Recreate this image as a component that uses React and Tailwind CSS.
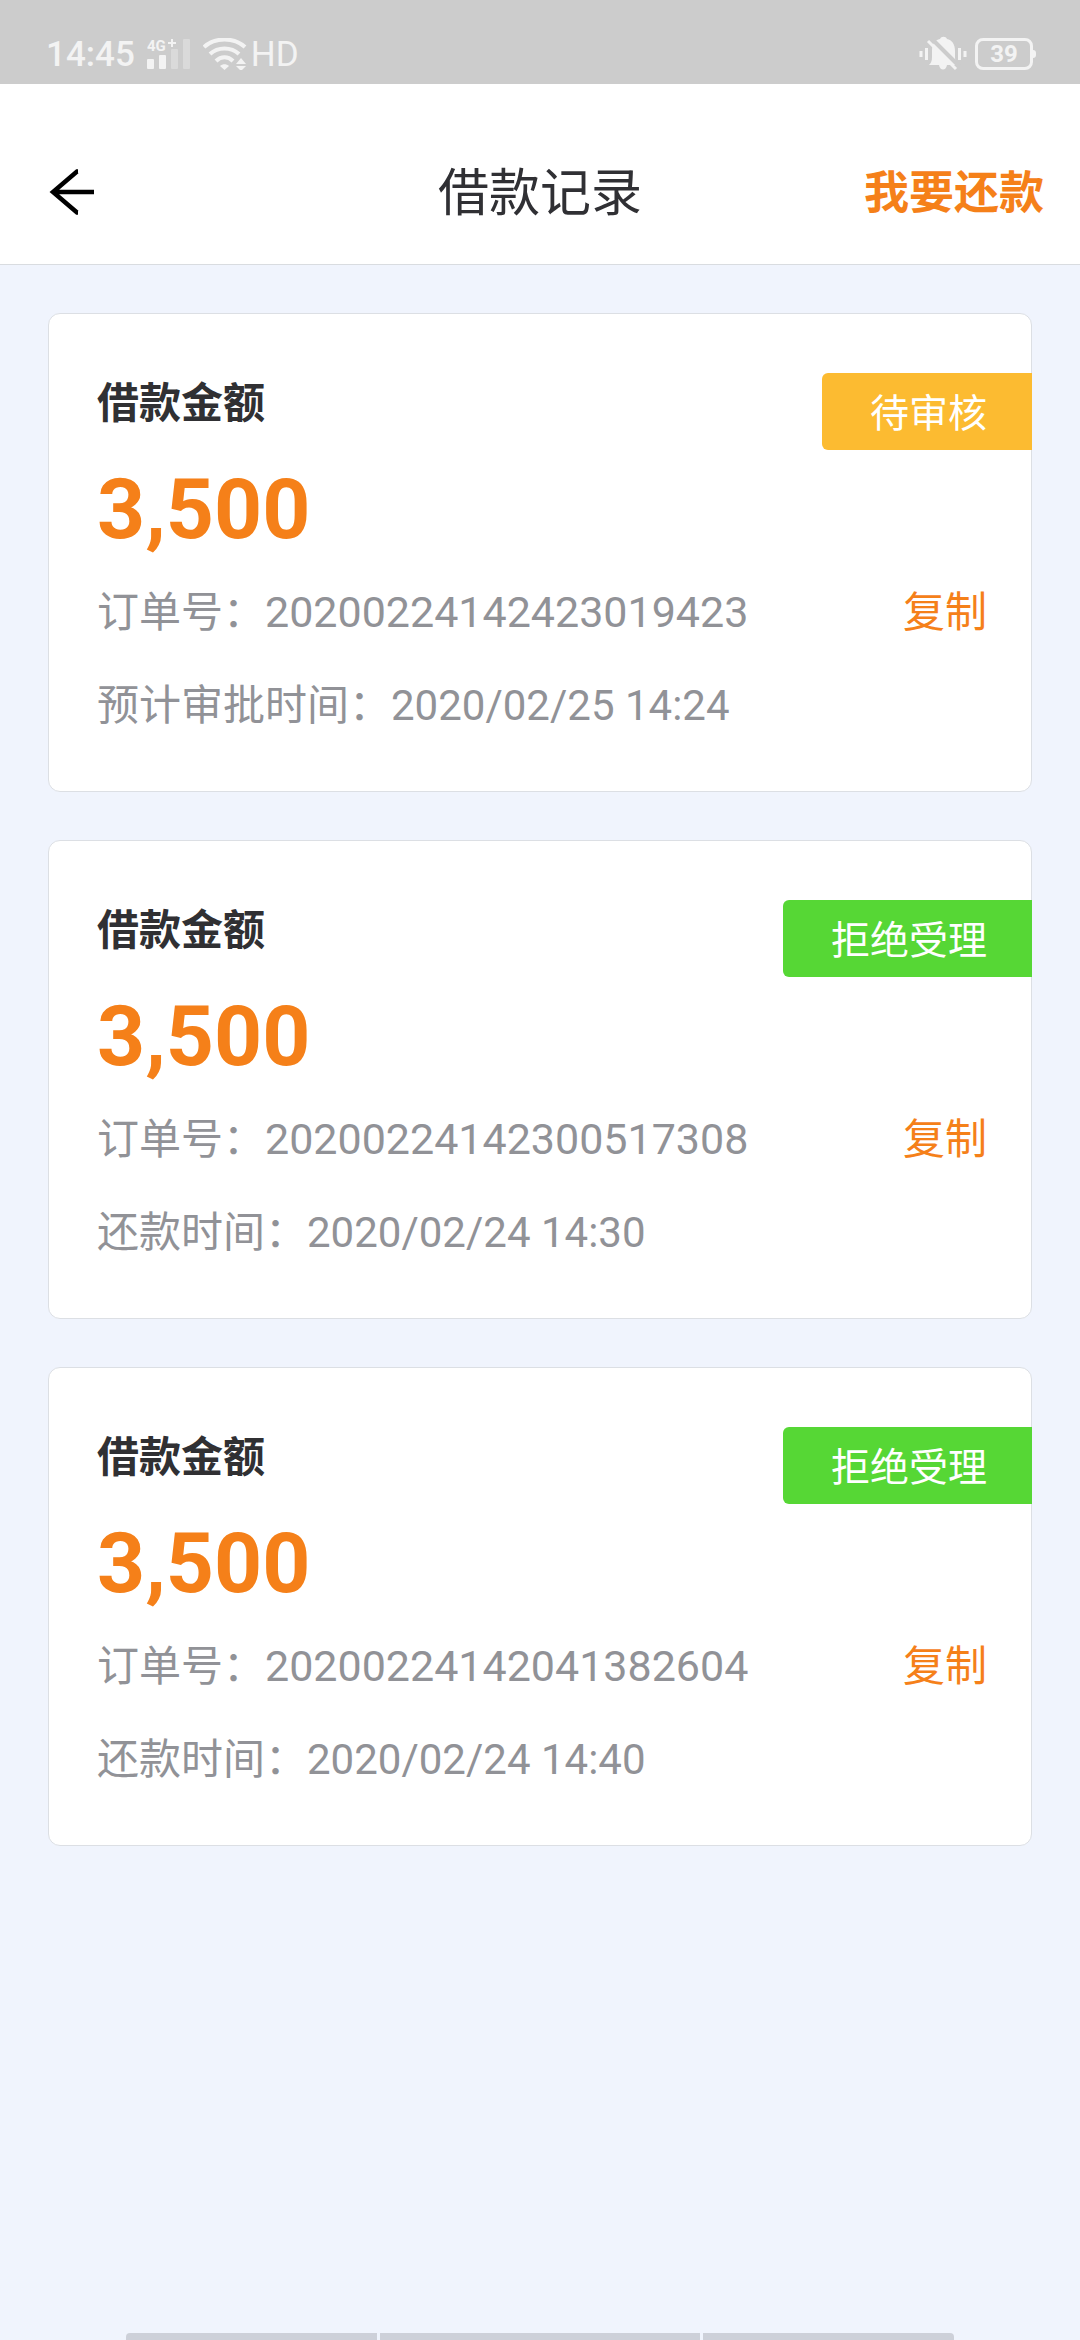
const records = [
    {
        order: "20200224142423019423",
        timeLabel: "预计审批时间：",
        time: "2020/02/25 14:24",
        status: "待审核",
        statusClass: "bg-[#fcbb31]",
    },
    {
        order: "20200224142300517308",
        timeLabel: "还款时间：",
        time: "2020/02/24 14:30",
        status: "拒绝受理",
        statusClass: "bg-[#56d735]",
    },
    {
        order: "20200224142041382604",
        timeLabel: "还款时间：",
        time: "2020/02/24 14:40",
        status: "拒绝受理",
        statusClass: "bg-[#56d735]",
    },
]

const SignalIcon = () => (
    <svg className="h-9 w-11" viewBox="0 -3 44 36" fill="currentColor">
        <text x="0" y="12" fontSize="15" fontWeight="700">4G</text>
        <path d="M21 4h8M25 0v8" stroke="currentColor" strokeWidth="2"/>
        <rect x="0" y="20" width="7" height="10" rx="1"/>
        <rect x="12" y="16" width="7" height="14" rx="1"/>
        <rect x="24" y="10" width="7" height="20" rx="1" opacity="0.35"/>
        <rect x="36" y="0" width="7" height="30" rx="1" opacity="0.35"/>
    </svg>
)

const WifiIcon = () => (
    <svg className="h-8 w-11" viewBox="0 0 44 32" fill="none" stroke="currentColor" strokeWidth="4">
        <path d="M1 9C12-1 31-1 42 9"/>
        <path d="M7 16C15 8.500 28 8.500 36 16"/>
        <path d="M13 23C18 18 25 18 30 23"/>
        <path d="M17 28c2.500-2.500 6.500-2.500 9 0l-4.500 4z" fill="currentColor" stroke="none"/>
        <path d="M33 26l5-6 5 6zM33 28h10l-5 5z" fill="currentColor" stroke="none"/>
    </svg>
)

const MutedBellIcon = () => (
    <svg className="h-9 w-12" viewBox="0 0 48 36" fill="currentColor">
        <path d="M10 29c2-2 3-4 3-8v-6C13 8 16 4 21 3c1-3 6-3 7 0 5 1 8 5 8 12v6c0 4 1 6 3 8H28c-1 6-7 6-8 0z"/>
        <path d="M12 2l28 28" stroke="#cccccc" strokeWidth="4"/>
        <path d="M9 5l28 28" stroke="currentColor" strokeWidth="3"/>
        <path d="M7.500 12v12M2 15v6M40.500 12v12M46 15v6" stroke="currentColor" strokeWidth="3"/>
    </svg>
)

const StatusBar = () => (
    <div className="flex h-[84px] items-center justify-between bg-[#cccccc] pt-6 pr-11 pl-[46px] text-[#f3f3f3]">
        <div className="flex items-center">
            <span className="pt-0.5 text-[35px] leading-9 font-medium">14:45</span>
            <span className="ml-3 flex items-center gap-3">
                <SignalIcon/>
                <WifiIcon/>
            </span>
            <span className="ml-1 pt-0.5 text-[35px] leading-9">HD</span>
        </div>
        <div className="flex items-center">
            <MutedBellIcon/>
            <span className="ml-2 flex h-8 w-[58px] items-center justify-center rounded-lg border-[3px] border-current text-2xl font-bold">
                39
            </span>
            <span className="h-2 w-[3px] rounded-r-sm bg-current"/>
        </div>
    </div>
)

const Header = () => (
    <header className="grid h-[181px] grid-cols-[1fr_auto_1fr] items-center border-b border-[#d9dce0] bg-white px-9 pt-9">
        <button type="button" aria-label="返回" className="ml-3 justify-self-start">
            <svg className="h-12 w-12" viewBox="0 0 48 48" fill="none" stroke="#000" strokeWidth="4.500">
                <path d="M46 24H5M30 3.500h-1L5 24l24 20.500h1"/>
            </svg>
        </button>
        <h1 className="pt-1 text-[51px] leading-[60px] text-[#303034]">借款记录</h1>
        <a href="#repay" className="justify-self-end pt-1 text-[45px] leading-[60px] font-bold text-[#f58019]">
            我要还款
        </a>
    </header>
)

const RecordCard = ({record}) => {
    const {order, timeLabel, time, status, statusClass} = record

    return (
        <article className="rounded-xl border border-[#dcdfe4] bg-white pt-[59px] pb-[53px] pl-12">
            <div className="flex h-[79px] items-start justify-between">
                <h2 className="text-[42px] leading-[62px] font-bold text-[#303033]">借款金额</h2>
                <span className={`-mr-px rounded-l-md pt-[5px] pr-[45px] pl-12 text-[39px] leading-[72px] text-white ${statusClass}`}>
                    {status}
                </span>
            </div>
            <p className="text-[84px] leading-[116px] font-bold text-[#f58019]">3,500</p>
            <div className="mt-3 flex items-center justify-between pr-11 text-[42px] leading-[64px] text-[#919297]">
                <p>
                    订单号：<span className="text-[43px]">{order}</span>
                </p>
                <button type="button" className="text-[#f58019]">复制</button>
            </div>
            <p className="mt-[29px] text-[42px] leading-[64px] text-[#919297]">
                {timeLabel}{time}
            </p>
        </article>
    )
}

const App = () => (
    <div className="flex min-h-screen flex-col bg-[#f0f4fd] font-['Roboto','Noto_Sans_CJK_SC',sans-serif]">
        <StatusBar/>
        <Header/>
        <main className="flex flex-col gap-12 p-12">
            {records.map((record) => (
                <RecordCard key={record.order} record={record}/>
            ))}
        </main>
        <div className="mt-auto grid h-[7px] grid-cols-[251fr_320fr_251fr] gap-[3px] px-[126px]">
            <span className="rounded-tl bg-[#cdd0d9]"/>
            <span className="bg-[#cdd0d9]"/>
            <span className="rounded-tr bg-[#cdd0d9]"/>
        </div>
    </div>
)

export default App
